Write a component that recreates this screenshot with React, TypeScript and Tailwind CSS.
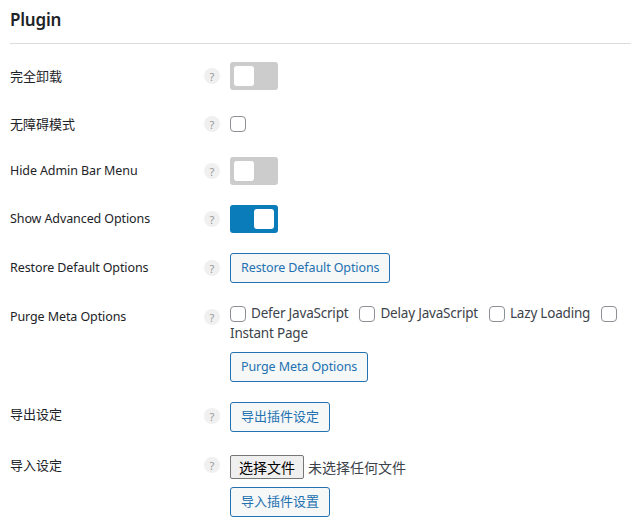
import React from "react";

const font = { fontFamily: '"Noto Sans", "Noto Sans CJK SC", sans-serif' };

function Help() {
  return (
    <div className="w-[16px] h-[16px] rounded-full bg-[#f0f0f1] flex items-center justify-center text-[11px] leading-none text-[#999] shrink-0">
      ?
    </div>
  );
}

function Toggle({ on }: { on?: boolean }) {
  return (
    <div
      className={
        "w-[48px] h-[28px] rounded-[3px] p-[4px] flex " +
        (on ? "bg-[#0a7cba] justify-end" : "bg-[#cccccc] justify-start")
      }
    >
      <div className="w-[20px] h-[20px] rounded-[3px] bg-white" />
    </div>
  );
}

function Checkbox({ className = "" }: { className?: string }) {
  return (
    <span
      className={
        "inline-block w-[16px] h-[16px] rounded-[4px] border border-[#8c8f94] bg-white align-middle shrink-0 " +
        className
      }
    />
  );
}

function Btn({ children, cjk }: { children: React.ReactNode; cjk?: boolean }) {
  return (
    <div
      className={
        "inline-flex items-center h-[30px] px-[10px] border border-[#2271b1] rounded-[3px] bg-[#f6f7f7] text-[#2271b1] " +
        (cjk ? "text-[13px]" : "text-[12.5px] tracking-[-0.1px]")
      }
    >
      {children}
    </div>
  );
}

function Label({ children, cjk }: { children: React.ReactNode; cjk?: boolean }) {
  return (
    <div
      className={
        "w-[194px] shrink-0 leading-[18px] text-[#1d2327] " +
        (cjk ? "text-[13px]" : "text-[12.5px] tracking-[-0.1px]")
      }
    >
      {children}
    </div>
  );
}

export default function App() {
  return (
    <div className="w-[631px] h-[532px] bg-white overflow-hidden pl-[10px]" style={font}>
      <h2 className="text-[17px] tracking-[-0.2px] font-semibold text-[#1d2327] leading-[24px] pt-[8px] pb-[11px] border-b border-[#dcdcde]">
        Plugin
      </h2>
      <div className="flex flex-col pt-[18px]">
        <div className="flex items-center h-[28px]">
          <Label cjk>完全卸载</Label>
          <Help />
          <div className="ml-[10px]"><Toggle /></div>
        </div>
        <div className="flex items-center h-[28px] mt-[20px]">
          <Label cjk>无障碍模式</Label>
          <Help />
          <div className="ml-[10px] flex"><Checkbox /></div>
        </div>
        <div className="flex items-center h-[28px] mt-[19px]">
          <Label>Hide Admin Bar Menu</Label>
          <Help />
          <div className="ml-[10px]"><Toggle /></div>
        </div>
        <div className="flex items-center h-[28px] mt-[20px]">
          <Label>Show Advanced Options</Label>
          <Help />
          <div className="ml-[10px]"><Toggle on /></div>
        </div>
        <div className="flex items-center h-[30px] mt-[20px]">
          <Label>Restore Default Options</Label>
          <Help />
          <div className="ml-[10px]"><Btn>Restore Default Options</Btn></div>
        </div>
        <div className="flex items-start mt-[20px]">
          <div className="pt-[5px]"><Label>Purge Meta Options</Label></div>
          <div className="pt-[6px]"><Help /></div>
          <div className="ml-[10px] w-[391px]">
            <div className="text-[13.5px] tracking-[-0.2px] leading-[20px] text-[#3c434a]">
              <Checkbox />
              <span className="ml-[5px] mr-[11px]">Defer JavaScript</span>
              <Checkbox />
              <span className="ml-[5px] mr-[11px]">Delay JavaScript</span>
              <Checkbox />
              <span className="ml-[5px] mr-[11px]">Lazy Loading</span>
              <Checkbox /> Instant Page
            </div>
            <div className="mt-[9px]"><Btn>Purge Meta Options</Btn></div>
          </div>
        </div>
        <div className="flex items-start mt-[20px]">
          <div className="pt-[3px]"><Label cjk>导出设定</Label></div>
          <div className="pt-[6px]"><Help /></div>
          <div className="ml-[10px]"><Btn cjk>导出插件设定</Btn></div>
        </div>
        <div className="flex items-start mt-[23px]">
          <div className="pt-[1px]"><Label cjk>导入设定</Label></div>
          <div className="pt-[2px]"><Help /></div>
          <div className="ml-[10px]">
            <div className="flex items-center h-[24px]">
              <div className="h-[24px] px-[8px] flex items-center border border-[#767676] rounded-[2px] bg-[#efefef] text-[14px] text-black">
                选择文件
              </div>
              <span className="ml-[4px] text-[14px] text-[#3c434a]">未选择任何文件</span>
            </div>
            <div className="mt-[8px]"><Btn cjk>导入插件设置</Btn></div>
          </div>
        </div>
      </div>
    </div>
  );
}
